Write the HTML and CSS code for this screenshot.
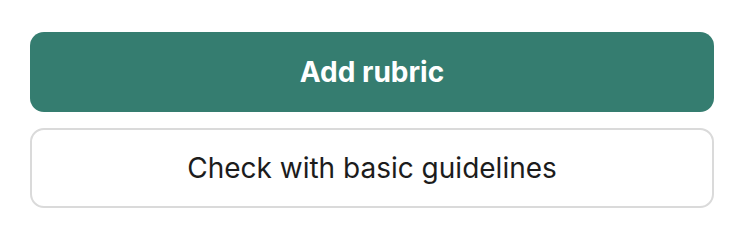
FILE: index.html
```html
<!DOCTYPE html>
<html lang="en">

<head>
  <meta charset="UTF-8">
  <meta name="viewport" content="width=device-width, initial-scale=1.0">
  <title>Rubric</title>
  <link rel="stylesheet" href="styles.css">
</head>

<body>
  <div class="actions">
    <button class="btn btn-primary">Add rubric</button>
    <button class="btn btn-outline">Check with basic guidelines</button>
  </div>
</body>

</html>
```

FILE: styles.css
```css
* {
  box-sizing: border-box;
}

html,
body {
  margin: 0;
  padding: 0;
  background: #fff;
}

body {
  font-family: Inter, "Noto Sans", sans-serif;
}

.actions {
  display: flex;
  flex-direction: column;
  gap: 16px;
  padding: 32px 32px 0 30px;
}

.btn {
  height: 80px;
  width: 100%;
  border-radius: 14px;
  font-family: inherit;
  font-size: 28px;
  cursor: pointer;
}

.btn-primary {
  background: #357d70;
  border: none;
  color: #fff;
  font-weight: 700;
}

.btn-outline {
  background: #fff;
  border: 2px solid #dadada;
  color: #1c1c1c;
  font-weight: 400;
}
```
